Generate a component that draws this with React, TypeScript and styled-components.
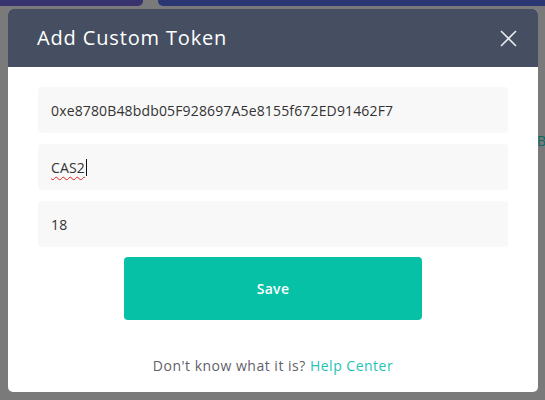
import React from "react";
import styled, { createGlobalStyle } from "styled-components";

const Global = createGlobalStyle`
  html, body { margin: 0; padding: 0; }
  body {
    width: 545px;
    height: 400px;
    overflow: hidden;
    background: #7a7a7a;
    font-family: "Open Sans", "Liberation Sans", sans-serif;
  }
`;

const Screen = styled.div`
  position: relative;
  width: 545px;
  height: 400px;
  display: flex;
  flex-direction: column;
  background: #7a7a7a;
  overflow: hidden;
`;

const TopBars = styled.div`
  display: flex;
  justify-content: space-between;
  height: 6px;
`;

const TopBar = styled.div<{ $w: number; $c: string; $side: "l" | "r" }>`
  width: ${(p) => p.$w}px;
  height: 6px;
  background: ${(p) => p.$c};
  border-radius: ${(p) => (p.$side === "l" ? "0 0 5px 0" : "0 0 0 5px")};
`;

const BehindText = styled.span`
  position: absolute;
  left: 537px;
  top: 131px;
  width: 8px;
  overflow: hidden;
  font-size: 14px;
  color: #0c6a62;
`;

const Modal = styled.div`
  position: relative;
  margin: 3px 7px 0 8px;
  width: 530px;
  height: 383px;
  border-radius: 5px;
  background: #ffffff;
  overflow: hidden;
  display: flex;
  flex-direction: column;
`;

const Header = styled.div`
  height: 58px;
  background: #454f61;
  display: flex;
  align-items: center;
  justify-content: space-between;
  padding: 0 21px 0 29px;
`;

const Title = styled.h2`
  margin: 0;
  font-size: 20px;
  font-weight: 400;
  color: #ffffff;
  letter-spacing: 0.85px;
  line-height: 24px;
`;

const CloseButton = styled.button`
  width: 17px;
  height: 17px;
  padding: 0;
  border: 0;
  background: transparent;
  display: flex;
  align-items: center;
  justify-content: center;
  cursor: pointer;
`;

const Body = styled.div`
  flex: 1;
  display: flex;
  flex-direction: column;
  padding: 20px 30px 0 30px;
`;

const Fields = styled.div`
  display: flex;
  flex-direction: column;
  gap: 11px;
`;

const Field = styled.div`
  height: 46px;
  background: #f8f8f8;
  border-radius: 4px;
  display: flex;
  align-items: center;
  padding: 0 13px;
  font-size: 14px;
  color: #333333;
  letter-spacing: 0.15px;
`;

const Misspelled = styled.span`
  text-decoration: underline wavy #e02020;
  text-decoration-thickness: 1px;
  text-underline-offset: 3px;
`;

const Caret = styled.span`
  display: inline-block;
  width: 1px;
  height: 17px;
  background: #111111;
  margin-left: 1px;
`;

const SaveButton = styled.button`
  align-self: center;
  margin-top: 10px;
  width: 298px;
  height: 63px;
  border: 0;
  border-radius: 4px;
  background: #06c1a6;
  color: #ffffff;
  font-family: "Open Sans", "Liberation Sans", sans-serif;
  font-size: 14px;
  font-weight: 600;
  letter-spacing: 0.3px;
  cursor: pointer;
`;

const Help = styled.p`
  margin: 36px 0 0 0;
  text-align: center;
  font-size: 14px;
  color: #5f5f6a;
  letter-spacing: 0.5px;
`;

const HelpLink = styled.a`
  color: #1ec2b6;
  text-decoration: none;
`;

export default function App() {
  return (
    <>
      <Global />
      <Screen>
        <TopBars>
          <TopBar $w={143} $c="#38326f" $side="l" />
          <TopBar $w={387} $c="#2b3773" $side="r" />
        </TopBars>
        <BehindText>B</BehindText>
        <Modal>
          <Header>
            <Title>Add Custom Token</Title>
            <CloseButton aria-label="Close">
              <svg width="17" height="17" viewBox="0 0 17 17">
                <path d="M1 1L16 16M16 1L1 16" stroke="#e6e8ec" strokeWidth="1.6" />
              </svg>
            </CloseButton>
          </Header>
          <Body>
            <Fields>
              <Field>0xe8780B48bdb05F928697A5e8155f672ED91462F7</Field>
              <Field>
                <Misspelled>CAS2</Misspelled>
                <Caret />
              </Field>
              <Field>18</Field>
            </Fields>
            <SaveButton>Save</SaveButton>
            <Help>
              Don't know what it is? <HelpLink href="#">Help Center</HelpLink>
            </Help>
          </Body>
        </Modal>
      </Screen>
    </>
  );
}
